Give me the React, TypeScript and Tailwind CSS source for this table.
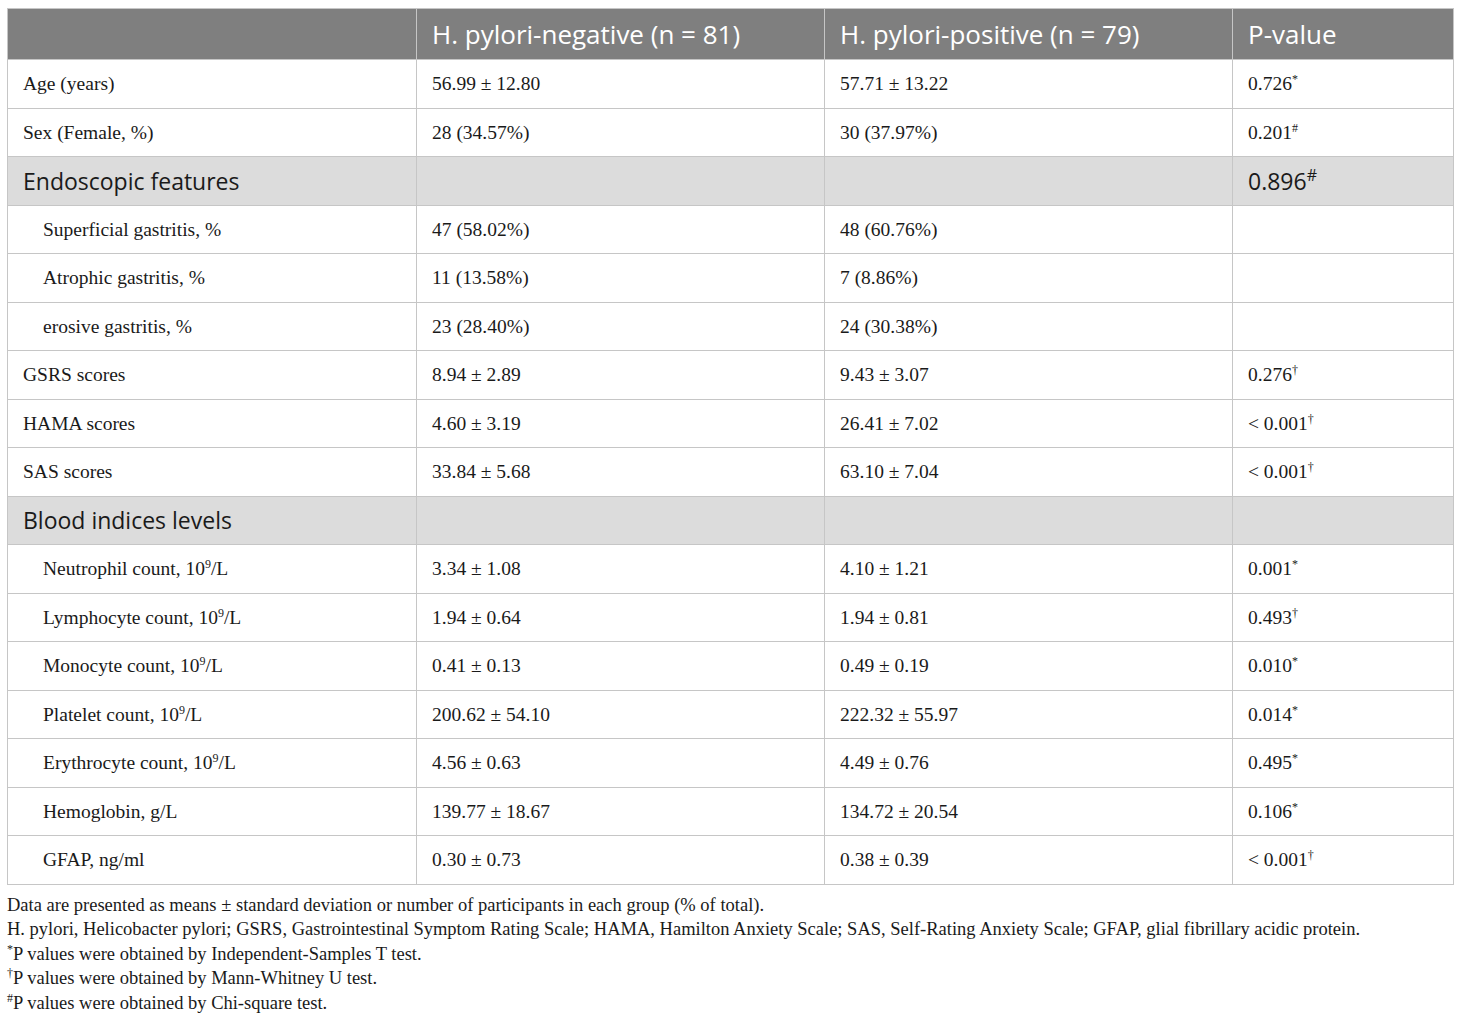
import React from "react";

type Row =
  | { kind: "data"; label: React.ReactNode; indent?: boolean; neg: string; pos: string; p?: React.ReactNode }
  | { kind: "section"; label: string; p?: React.ReactNode };

const Sup = ({ children }: { children: React.ReactNode }) => (
  <sup className="text-[12px] relative -top-[7px]">{children}</sup>
);

const unit = (name: string) => (
  <>
    {name}, 10<Sup>9</Sup>/L
  </>
);

const ROWS: Row[] = [
  { kind: "data", label: "Age (years)", neg: "56.99 ± 12.80", pos: "57.71 ± 13.22", p: <>0.726<Sup>*</Sup></> },
  { kind: "data", label: "Sex (Female, %)", neg: "28 (34.57%)", pos: "30 (37.97%)", p: <>0.201<Sup>#</Sup></> },
  { kind: "section", label: "Endoscopic features", p: <>0.896<sup className="text-[16px] relative -top-[9px]">#</sup></> },
  { kind: "data", indent: true, label: "Superficial gastritis, %", neg: "47 (58.02%)", pos: "48 (60.76%)" },
  { kind: "data", indent: true, label: "Atrophic gastritis, %", neg: "11 (13.58%)", pos: "7 (8.86%)" },
  { kind: "data", indent: true, label: "erosive gastritis, %", neg: "23 (28.40%)", pos: "24 (30.38%)" },
  { kind: "data", label: "GSRS scores", neg: "8.94 ± 2.89", pos: "9.43 ± 3.07", p: <>0.276<Sup>†</Sup></> },
  { kind: "data", label: "HAMA scores", neg: "4.60 ± 3.19", pos: "26.41 ± 7.02", p: <>&lt; 0.001<Sup>†</Sup></> },
  { kind: "data", label: "SAS scores", neg: "33.84 ± 5.68", pos: "63.10 ± 7.04", p: <>&lt; 0.001<Sup>†</Sup></> },
  { kind: "section", label: "Blood indices levels" },
  { kind: "data", indent: true, label: unit("Neutrophil count"), neg: "3.34 ± 1.08", pos: "4.10 ± 1.21", p: <>0.001<Sup>*</Sup></> },
  { kind: "data", indent: true, label: unit("Lymphocyte count"), neg: "1.94 ± 0.64", pos: "1.94 ± 0.81", p: <>0.493<Sup>†</Sup></> },
  { kind: "data", indent: true, label: unit("Monocyte count"), neg: "0.41 ± 0.13", pos: "0.49 ± 0.19", p: <>0.010<Sup>*</Sup></> },
  { kind: "data", indent: true, label: unit("Platelet count"), neg: "200.62 ± 54.10", pos: "222.32 ± 55.97", p: <>0.014<Sup>*</Sup></> },
  { kind: "data", indent: true, label: unit("Erythrocyte count"), neg: "4.56 ± 0.63", pos: "4.49 ± 0.76", p: <>0.495<Sup>*</Sup></> },
  { kind: "data", indent: true, label: "Hemoglobin, g/L", neg: "139.77 ± 18.67", pos: "134.72 ± 20.54", p: <>0.106<Sup>*</Sup></> },
  { kind: "data", indent: true, label: "GFAP, ng/ml", neg: "0.30 ± 0.73", pos: "0.38 ± 0.39", p: <>&lt; 0.001<Sup>†</Sup></> },
];

const serif = "font-['Liberation_Serif',serif]";
const sans = "font-['Open_Sans',sans-serif]";
const cell = "border border-[#c6c6c6] px-[15px] align-middle whitespace-nowrap";

export default function App() {
  return (
    <div className="w-[1460px] h-[1020px] bg-white pt-2 px-[7px] text-[#1a1a1a]">
      <table className="border-collapse table-fixed w-[1446px]">
        <colgroup>
          <col className="w-[409px]" />
          <col className="w-[408px]" />
          <col className="w-[408px]" />
          <col className="w-[221px]" />
        </colgroup>
        <thead>
          <tr className={`h-[51px] bg-[#7f7f7f] text-white text-[26px] ${sans}`}>
            <th className={`${cell} font-normal text-left`}></th>
            <th className={`${cell} font-normal text-left`}>H. pylori-negative (n = 81)</th>
            <th className={`${cell} font-normal text-left`}>H. pylori-positive (n = 79)</th>
            <th className={`${cell} font-normal text-left`}>P-value</th>
          </tr>
        </thead>
        <tbody>
          {ROWS.map((r, i) =>
            r.kind === "section" ? (
              <tr key={i} className={`h-[48.5px] bg-[#dcdcdc] text-[23px] ${sans}`}>
                <td className={cell}>{r.label}</td>
                <td className={cell}></td>
                <td className={cell}></td>
                <td className={cell}>{r.p}</td>
              </tr>
            ) : (
              <tr key={i} className={`h-[48.5px] text-[19.5px] ${serif}`}>
                <td className={`${cell} ${r.indent ? "pl-[35px]" : ""}`}>{r.label}</td>
                <td className={cell}>{r.neg}</td>
                <td className={cell}>{r.pos}</td>
                <td className={cell}>{r.p}</td>
              </tr>
            ),
          )}
        </tbody>
      </table>
      <div className={`mt-[8px] text-[18.5px] leading-[24.5px] whitespace-nowrap ${serif}`}>
        <p>Data are presented as means ± standard deviation or number of participants in each group (% of total).</p>
        <p>
          H. pylori, Helicobacter pylori; GSRS, Gastrointestinal Symptom Rating Scale; HAMA, Hamilton Anxiety Scale; SAS,
          Self-Rating Anxiety Scale; GFAP, glial fibrillary acidic protein.
        </p>
        <p>
          <Sup>*</Sup>P values were obtained by Independent-Samples T test.
        </p>
        <p>
          <Sup>†</Sup>P values were obtained by Mann-Whitney U test.
        </p>
        <p>
          <Sup>#</Sup>P values were obtained by Chi-square test.
        </p>
      </div>
    </div>
  );
}
